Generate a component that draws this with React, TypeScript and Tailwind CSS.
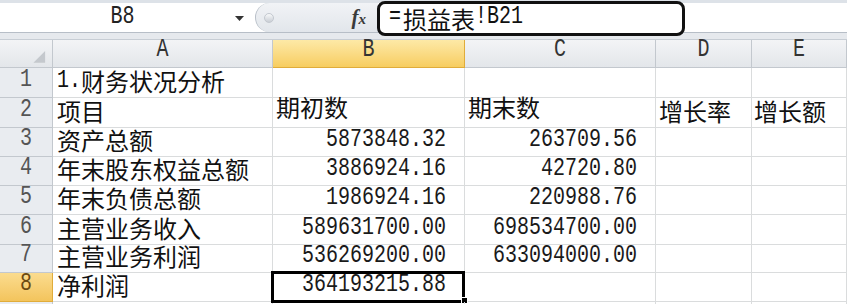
import type { ReactNode } from "react";

// Half-width Latin glyphs: narrow mono face, stretched tall like a CJK system font
function Lat({ children, className = "" }: { children: ReactNode; className?: string }) {
  return (
    <span
      className={`inline-block origin-bottom scale-y-[1.3] [font-family:'Liberation_Mono',monospace] text-[20px] leading-none ${className}`}
    >
      {children}
    </span>
  );
}

function Cjk({ children }: { children: ReactNode }) {
  return (
    <span className="[font-family:'Noto_Sans_CJK_SC',sans-serif] text-[24px] leading-none">
      {children}
    </span>
  );
}

const colW = ["w-[53px]", "w-[220px]", "w-[192px]", "w-[191px]", "w-[96px]", "flex-1"];
const rowH = ["h-[30px]", "h-[30px]", "h-[29px]", "h-[29px]", "h-[29px]", "h-[30px]", "h-[28px]", "h-[29px]", "h-[20px]"];

type Row = { label?: ReactNode; b?: string; c?: string; bText?: string; cText?: string; d?: string; e?: string };

const rows: Row[] = [
  { label: <><Lat>1.</Lat><Cjk>财务状况分析</Cjk></> },
  { label: <Cjk>项目</Cjk>, bText: "期初数", cText: "期末数", d: "增长率", e: "增长额" },
  { label: <Cjk>资产总额</Cjk>, b: "5873848.32", c: "263709.56" },
  { label: <Cjk>年末股东权益总额</Cjk>, b: "3886924.16", c: "42720.80" },
  { label: <Cjk>年末负债总额</Cjk>, b: "1986924.16", c: "220988.76" },
  { label: <Cjk>主营业务收入</Cjk>, b: "589631700.00", c: "698534700.00" },
  { label: <Cjk>主营业务利润</Cjk>, b: "536269200.00", c: "633094000.00" },
  { label: <Cjk>净利润</Cjk>, b: "364193215.88" },
  {},
];

function FormulaBar() {
  return (
    <div className="relative">
      <div className="h-[3px] bg-[#dde2e8]" />
      <div className="flex h-[30px] border-b border-[#b7bec7]">
        <div className="flex w-[255px] items-center bg-white">
          <div className="flex flex-1 justify-center pl-[10px] pt-[2px]">
            <Lat className="text-[#222]">B8</Lat>
          </div>
          <svg width="10" height="6" viewBox="0 0 10 6" className="mr-[10px] mt-[2px]">
            <path d="M0 0 H9 L4.5 5 Z" fill="#333" />
          </svg>
        </div>
        <div className="relative flex w-[123px] items-center rounded-l-[16px] border-l border-[#b9c0c9] bg-gradient-to-b from-[#f1f3f6] to-[#e2e6eb]">
          <span className="ml-[8px] h-[10px] w-[10px] rounded-full border border-[#c3c8cf] bg-gradient-to-b from-[#f8f9fa] to-[#c9ced5]" />
          <span className="ml-auto mr-[12px] [font-family:'Liberation_Serif',serif] text-[21px] font-bold italic leading-none text-[#3a3a3a]">
            f<span className="text-[15px]">x</span>
          </span>
        </div>
        <div className="flex flex-1 items-center bg-white" />
      </div>
      <div className="h-[7px] border-b border-[#c7cdd4] bg-[#e6e9ed]" />
      {/* highlighted formula entry */}
      <div className="absolute left-[377px] top-[1px] flex h-[35px] w-[308px] items-center rounded-[8px] border-[3px] border-[#111] bg-white pl-[9px] text-[#111]">
        <Lat className="mr-[2px]">=</Lat>
        <Cjk>损益表</Cjk>
        <Lat>!B21</Lat>
      </div>
    </div>
  );
}

function HeaderRow() {
  const letters = ["", "A", "B", "C", "D", "E"];
  return (
    <div className="flex h-[28px]">
      {letters.map((l, i) => (
        <div
          key={i}
          className={`${colW[i]} flex items-end justify-center border-b border-r pb-[5px] ${
            i === 2
              ? "border-[#e0ac3a] bg-gradient-to-b from-[#fde9a6] to-[#f7cd5f]"
              : "border-[#c3c8ce] bg-gradient-to-b from-[#f3f4f6] to-[#e3e6ea]"
          }`}
        >
          {i === 0 ? (
            <svg width="53" height="24" viewBox="0 0 53 24" className="-mb-[5px]">
              <path d="M46 8 L46 20 L34 20 Z" fill="#c4c8cd" />
            </svg>
          ) : (
            <Lat className="text-[19px] text-[#333]">{l}</Lat>
          )}
        </div>
      ))}
    </div>
  );
}

function Num({ v }: { v?: string }) {
  return (
    <div className="flex flex-1 justify-end pb-[4px] pr-[18px] text-[#1a1a1a]">
      {v && <Lat>{v}</Lat>}
    </div>
  );
}

export default function App() {
  return (
    <div className="h-[304px] w-[847px] overflow-hidden bg-white text-[#111]">
      <FormulaBar />
      <HeaderRow />
      {rows.map((r, idx) => {
        const active = idx === 7;
        const cell = "flex items-end border-b border-r border-[#dadcdd]";
        return (
          <div key={idx} className={`flex ${rowH[idx]}`}>
            <div
              className={`${colW[0]} flex items-end justify-center border-b border-r pb-[5px] ${
                active
                  ? "border-[#e0ac3a] bg-gradient-to-b from-[#fbdc8e] to-[#f3c45c] text-[#6b4a12]"
                  : "border-[#c3c8ce] bg-[#e9ecf0] text-[#555]"
              }`}
            >
              {idx < 8 && <Lat className="text-[19px]">{idx + 1}</Lat>}
            </div>
            <div className={`${colW[1]} ${cell} pb-[4px] pl-[4px]`}>{r.label}</div>
            <div className={`${colW[2]} ${cell} relative`}>
              {r.bText ? (
                <div className="pb-[4px] pl-[3px]">
                  <Cjk>{r.bText}</Cjk>
                </div>
              ) : (
                <Num v={r.b} />
              )}
              {active && (
                <>
                  <div className="pointer-events-none absolute -left-[2px] -top-[2px] h-[32px] w-[194px] border-[3px] border-black" />
                  <div className="absolute -bottom-[3px] -right-[4px] h-[7px] w-[7px] border border-white bg-black" />
                </>
              )}
            </div>
            <div className={`${colW[3]} ${cell}`}>
              {r.cText ? (
                <div className="pb-[4px] pl-[3px]">
                  <Cjk>{r.cText}</Cjk>
                </div>
              ) : (
                <Num v={r.c} />
              )}
            </div>
            <div className={`${colW[4]} ${cell} pb-[4px] pl-[3px]`}>{r.d && <Cjk>{r.d}</Cjk>}</div>
            <div className={`${colW[5]} ${cell} pb-[4px] pl-[2px]`}>{r.e && <Cjk>{r.e}</Cjk>}</div>
          </div>
        );
      })}
    </div>
  );
}
